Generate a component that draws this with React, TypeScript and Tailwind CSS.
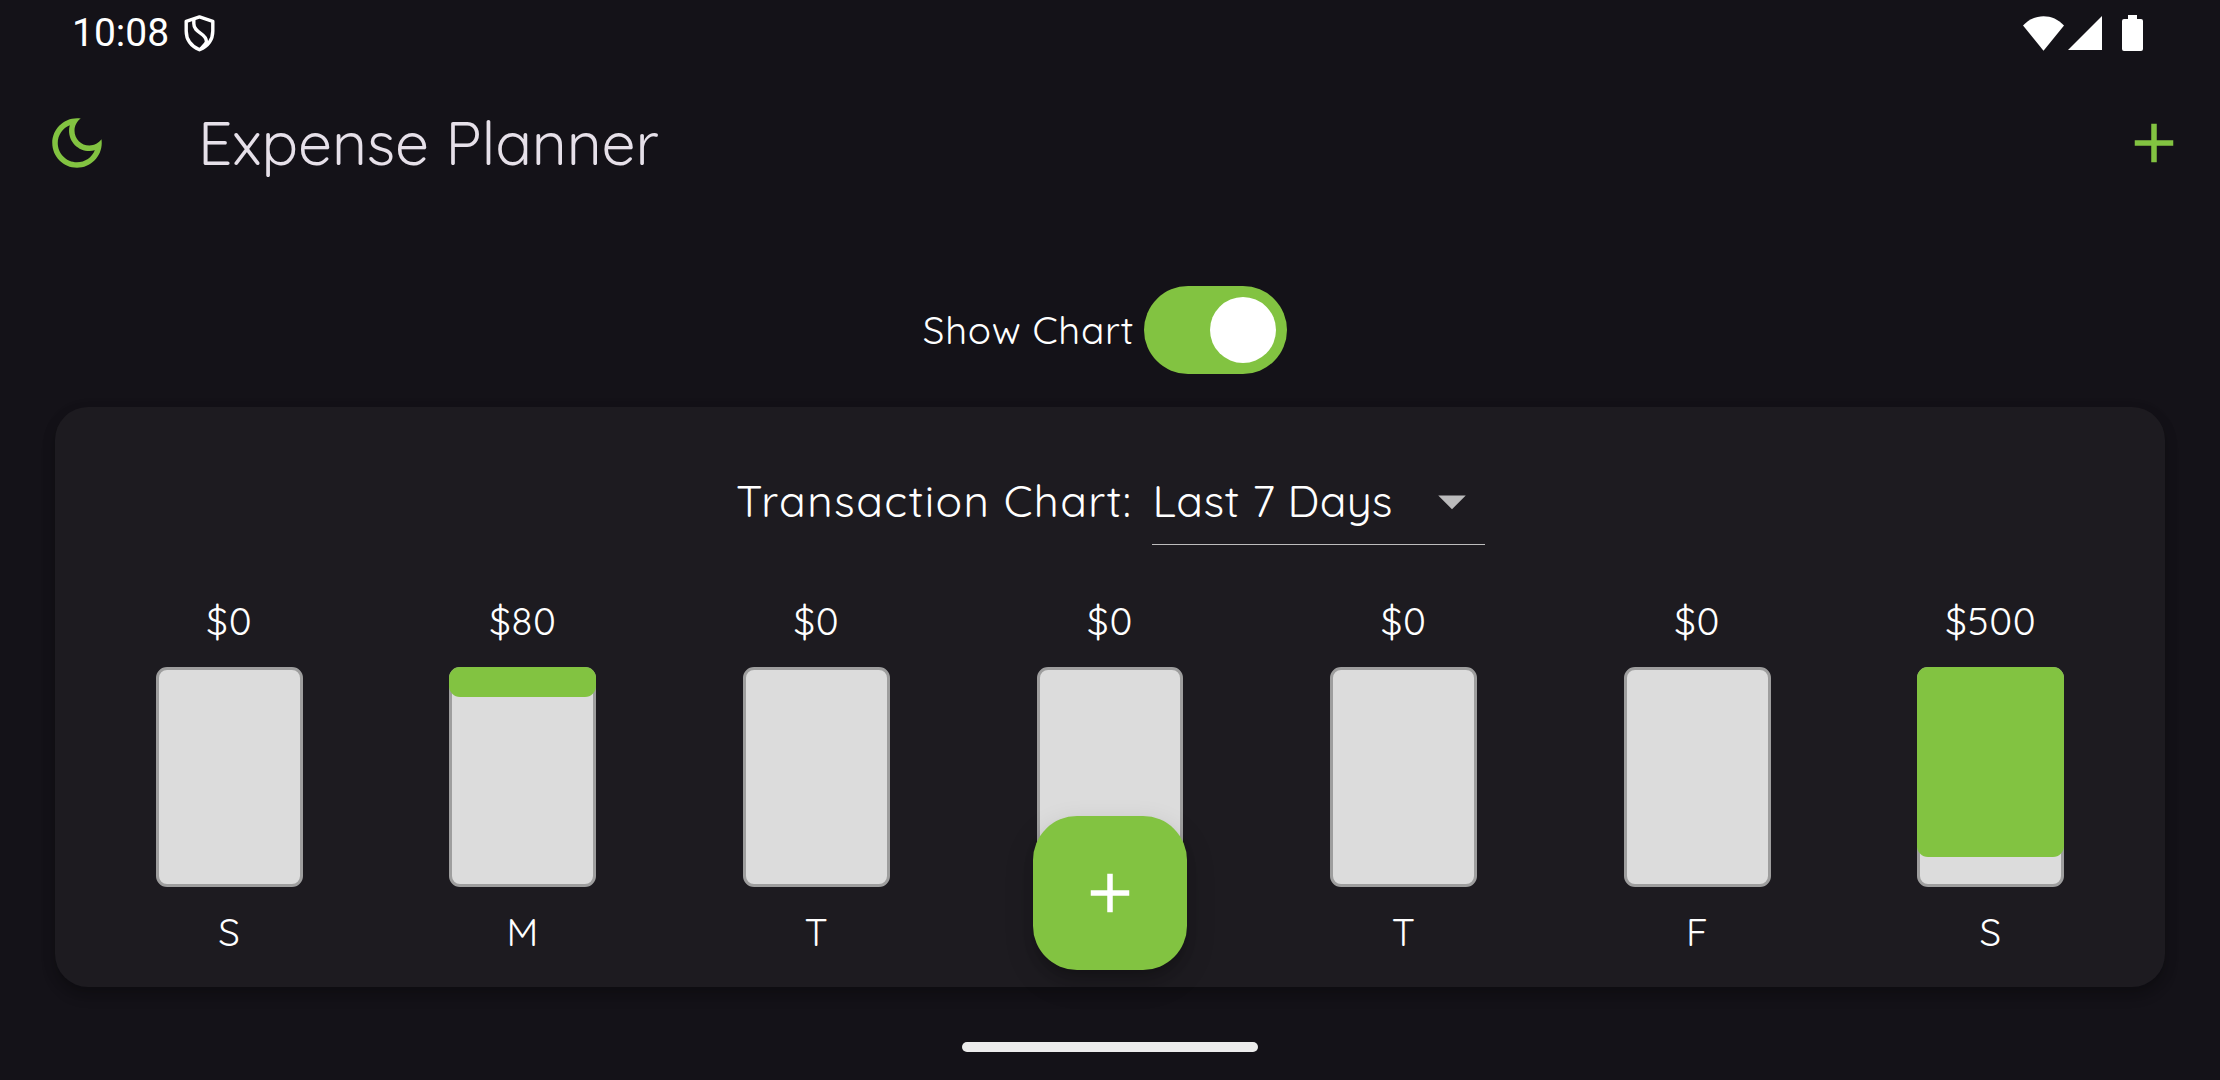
import React from 'react';

type Day = { label: string; amount: number };

const DAYS: Day[] = [
  { label: 'S', amount: 0 },
  { label: 'M', amount: 80 },
  { label: 'T', amount: 0 },
  { label: 'W', amount: 0 },
  { label: 'T', amount: 0 },
  { label: 'F', amount: 0 },
  { label: 'S', amount: 500 },
];

const TOTAL = DAYS.reduce((sum, d) => sum + d.amount, 0);

function PlusIcon({ className }: { className?: string }) {
  return (
    <svg viewBox="0 0 24 24" className={className} fill="currentColor" aria-hidden="true">
      <path d="M19 13h-6v6h-2v-6H5v-2h6V5h2v6h6v2z" />
    </svg>
  );
}

function MoonIcon({ className }: { className?: string }) {
  return (
    <svg viewBox="0 0 24 24" className={className} fill="currentColor" aria-hidden="true">
      <path d="M9.37,5.51C9.19,6.15,9.1,6.82,9.1,7.5c0,4.08,3.32,7.4,7.4,7.4c0.68,0,1.35-0.09,1.99-0.27C17.45,17.19,14.93,19,12,19c-3.86,0-7-3.14-7-7C5,9.07,6.81,6.55,9.37,5.51z M12,3c-4.97,0-9,4.03-9,9s4.03,9,9,9s9-4.03,9-9c0-0.46-0.04-0.92-0.1-1.36c-0.98,1.37-2.58,2.26-4.4,2.26c-2.98,0-5.4-2.42-5.4-5.4c0-1.81,0.89-3.42,2.26-4.4C12.92,3.04,12.46,3,12,3z" />
    </svg>
  );
}

function StatusBar() {
  return (
    <div className="flex h-[66px] items-center pr-[77px] pl-[72px] text-white">
      <span className="font-['Roboto',sans-serif] text-[39px] leading-none">10:08</span>
      <svg viewBox="0 0 31 37" className="ml-[15px] h-[37px] w-[31px]" fill="none" stroke="currentColor" strokeWidth="3.4" strokeLinejoin="round" aria-hidden="true">
        <path d="M15.5 1.9 L28.8 6.3 V16 C28.8 24.5 23.5 31.3 15.5 34.8 C7.5 31.3 2.2 24.5 2.2 16 V6.3 Z" />
        <path d="M9.8 4 V8.5 C9.8 18.5 22.4 17.5 22.4 26.5 V29" />
        <path d="M22.6 26 L15.5 34 L20 31.5 Z" fill="currentColor" strokeWidth="1.4" />
      </svg>
      <div className="ml-auto flex items-center">
        <svg viewBox="0 0 41 35" className="h-[35px] w-[41px]" fill="currentColor" aria-hidden="true">
          <path d="M0 9.6 C11 -3 30 -3 41 9.6 L20.5 34.7 Z" />
        </svg>
        <svg viewBox="0 0 34 34" className="ml-[4px] h-[34px] w-[34px]" fill="currentColor" aria-hidden="true">
          <path d="M34 0 V34 H0 Z" />
        </svg>
        <svg viewBox="0 0 21 36" className="-mt-px ml-[20px] h-[36px] w-[21px]" fill="currentColor" aria-hidden="true">
          <path d="M6 0 H15 V4 H19 Q21 4 21 6 V34 Q21 36 19 36 H2 Q0 36 0 34 V6 Q0 4 2 4 H6 Z" />
        </svg>
      </div>
    </div>
  );
}

function AppBar() {
  return (
    <header className="flex h-[154px] items-center pr-[33px] pl-[44px]">
      <MoonIcon className="h-[66px] w-[66px] text-[#82c341]" />
      <h1 className="ml-[88px] pb-[2px] text-[60.5px] leading-[76px] tracking-[-0.12px] text-[#e6e0e9]">Expense Planner</h1>
      <PlusIcon className="ml-auto h-[66px] w-[66px] text-[#82c341]" />
    </header>
  );
}

function ChartToggle() {
  return (
    <div className="mt-[66px] flex h-[88px] items-center justify-center pr-[10px]">
      <span className="text-[38.5px] leading-[48px] tracking-[0.6875px] text-white">Show Chart</span>
      <button type="button" role="switch" aria-checked="true" aria-label="Show chart" className="ml-[10px] flex h-[88px] w-[143px] items-center justify-end rounded-full bg-[#82c341] pr-[11px]">
        <span className="h-[66px] w-[66px] rounded-full bg-white" />
      </button>
    </div>
  );
}

function Bar({ day }: { day: Day }) {
  return (
    <div className="flex flex-1 flex-col items-center text-[38.5px] leading-[48px] tracking-[0.6875px] text-white">
      <span>${day.amount}</span>
      <div className="relative mt-[22px] h-[220px] w-1/2 rounded-[11px] border-[3px] border-[#9e9e9e] bg-[#dcdcdc]">
        {day.amount > 0 && (
          <div
            className="absolute -inset-x-[3px] -top-[3px] rounded-[11px] bg-[#82c341]"
            style={{ height: (220 * day.amount) / TOTAL }}
          />
        )}
      </div>
      <span className="mt-[21px]">{day.label}</span>
    </div>
  );
}

function ChartCard() {
  return (
    <section className="mx-[55px] mt-[33px] h-[580px] rounded-[33px] bg-[#1d1b20] px-[27.5px] pt-[61px] shadow-[0_8px_14px_rgba(0,0,0,0.22),0_3px_14px_rgba(0,0,0,0.12)]">
      <div className="flex items-start justify-center pl-px text-[44px] leading-[66px] text-white">
        <span className="tracking-[1.375px]">Transaction Chart:</span>
        <div className="ml-[20px] flex h-[77px] w-[332.5px] justify-between border-b border-[#bdbdbd]">
          <span className="tracking-[0.4125px] whitespace-nowrap">Last 7 Days</span>
          <svg viewBox="0 0 24 24" className="h-[66px] w-[66px] text-white/70" fill="currentColor" aria-hidden="true">
            <path d="M7 10l5 5 5-5z" />
          </svg>
        </div>
      </div>
      <div className="mt-[52px] flex">
        {DAYS.map((d, i) => (
          <Bar key={i} day={d} />
        ))}
      </div>
    </section>
  );
}

export default function App() {
  return (
    <div className="relative flex h-[1080px] w-[2220px] flex-col overflow-hidden bg-[#141218] font-['Quicksand','Inter',sans-serif] font-normal">
      <StatusBar />
      <AppBar />
      <ChartToggle />
      <ChartCard />
      <div className="mx-auto mt-[55px] h-[10px] w-[296px] rounded-full bg-[#ececec]" />
      <button
        type="button"
        aria-label="Add transaction"
        className="absolute bottom-[110px] left-1/2 flex h-[154px] w-[154px] -translate-x-1/2 items-center justify-center rounded-[44px] bg-[#82c341] text-white shadow-[0_8px_12px_-2px_rgba(0,0,0,0.2),0_12px_30px_rgba(0,0,0,0.16)]"
      >
        <PlusIcon className="h-[66px] w-[66px]" />
      </button>
    </div>
  );
}
